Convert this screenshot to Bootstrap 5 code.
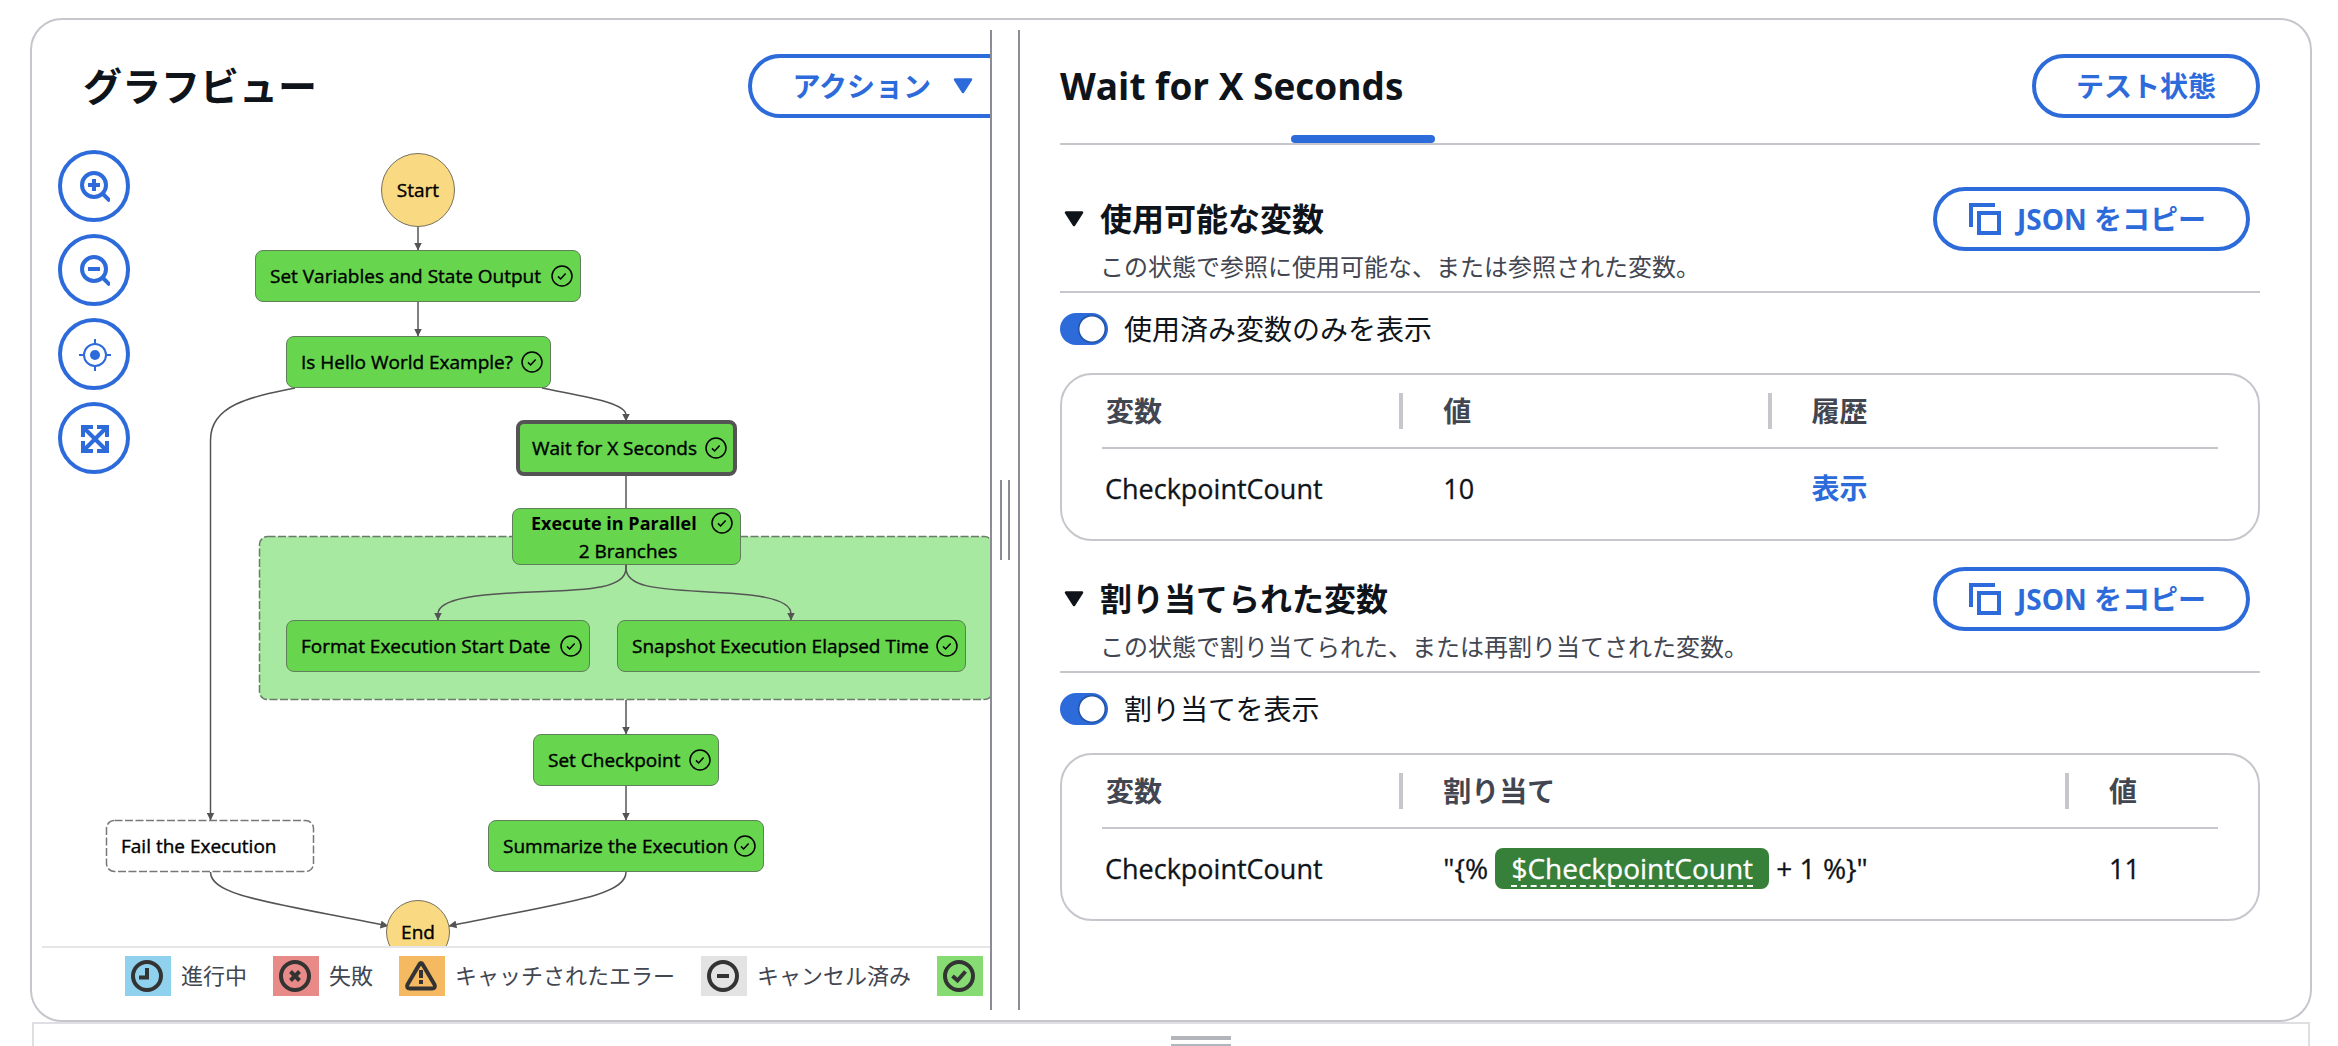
<!DOCTYPE html>
<html lang="ja">
<head>
<meta charset="utf-8">
<meta name="viewport" content="width=device-width, initial-scale=1">
<title>Wait for X Seconds</title>
<link href="https://cdn.jsdelivr.net/npm/bootstrap@5.3.0/dist/css/bootstrap.min.css" rel="stylesheet">
<style>
:root { --line:#c6c6cd; --blue:#2d6bdb; --ink:#0f141a; --soft:#424650; --rule:#8c8c94; --run:#67d54e; --edge:#545454; }
body { font-family:"Open Sans","Noto Sans CJK JP",sans-serif; color:var(--ink); background:#fff; font-size:27px; line-height:36px; }
.page { height:100vh; min-height:1046px; overflow:hidden; padding:18px 26px 0 30px; }
.shell { border:2px solid var(--line); border-radius:32px; padding:10px 0 10px 10px; min-height:0; }
.drawer { height:24px; margin:0 2px; border:2px solid #dedee3; border-bottom:0; padding:12px 0 0 60px; gap:4px; overflow:hidden; }
.drawer i { width:60px; height:4px; flex:none; background:#b4b4bb; }
.graph-pane { flex:948 1 0; min-width:0; overflow:hidden; }
.split { width:30px; flex:none; border:solid var(--rule); border-width:0 2px; gap:6px; cursor:col-resize; }
.split i { width:2px; height:80px; background:var(--rule); }
.detail-pane { flex:1200 1 0; min-width:0; padding:24px 50px 0 40px; }
.graph-head { padding:24px 0 0 41px; margin-right:-29px; }
h1, h2 { font-size:39px; line-height:64px; font-weight:700; margin:0; white-space:nowrap; }
h2 { font-size:37px; }
.pill { height:64px; border:4px solid var(--blue); border-radius:32px; color:var(--blue); font-size:28px; line-height:36px; font-weight:700; padding:0 40px; white-space:nowrap; background:#fff; }
.pill:hover { color:#002b66; border-color:#002b66; background:#f0fbff; }
.pill-copy { padding-left:32px; margin-right:10px; gap:16px; }
.pill svg, .round svg, .fold svg { fill:none; stroke:currentColor; flex:none; }
.pill-menu { gap:22px; padding-right:42px; }
.canvas { position:relative; min-height:0; overflow:hidden; }
.canvas > svg { position:absolute; left:0; top:0; }
.tools { position:absolute; left:16px; top:32px; gap:12px; }
.round { width:72px; height:72px; border:4px solid var(--blue); border-radius:50%; background:#fff; color:var(--blue); padding:0; }
.step { position:absolute; height:52px; border:1px solid #5f7f5b; border-radius:8px; background:var(--run); color:#000; font-size:19px; line-height:28px; white-space:nowrap; padding:0 7px 0 14px; -webkit-text-stroke:.4px; }
.step svg { flex:none; width:22px; height:22px; fill:none; stroke:#000; stroke-width:1.5; }
.step b { -webkit-text-stroke:0; font-size:18px; }
.step-round { border-radius:50%; background:#f9da83; border-color:#77705c; padding:0; }
.step-plain { background:none; border-color:transparent; }
.step-current { border:4px solid var(--edge); height:56px; padding:0 6px 0 12px; }
.step-parallel { height:57px; padding:0 7px 0 18px; }
.n-start { left:339px; top:35px; width:74px; height:74px; }
.n-vars { left:213px; top:132px; width:326px; }
.n-hello { left:244px; top:218px; width:265px; }
.n-wait { left:474px; top:302px; width:221px; }
.n-par { left:470px; top:390px; width:229px; }
.n-date { left:244px; top:502px; width:304px; }
.n-snap { left:575px; top:502px; width:349px; }
.n-check { left:491px; top:616px; width:186px; }
.n-sum { left:446px; top:702px; width:276px; }
.n-fail { left:64px; top:702px; width:208px; }
.n-end { left:344px; top:782px; width:64px; height:64px; }
.legend { height:64px; border-top:2px solid #e6e6e9; padding:8px 0 0 83px; gap:26px; font-size:22px; line-height:38px; color:var(--soft); white-space:nowrap; }
.legend > span { gap:10px; flex:none; }
.legend svg { width:46px; height:40px; fill:none; stroke:#333; stroke-width:4; }
.tabs { border-bottom:2px solid var(--line); padding:17px 0 0 231px; }
.tabs i { display:block; width:144px; height:8px; border-radius:4px; background:var(--blue); }
.var-block { margin-top:42px; }
.var-block + .var-block { margin-top:26px; }
.var-head { border-bottom:2px solid var(--line); padding-bottom:8px; }
.fold { border:0; background:none; padding:0 0 0 4px; gap:16px; color:var(--ink); font-weight:700; font-size:32px; line-height:64px; height:64px; }
.hint { margin:0 0 0 40px; font-size:24px; line-height:32px; color:var(--soft); }
.toggle-row { margin:20px 0 0; padding:0; min-height:32px; gap:16px; font-size:28px; line-height:32px; }
.toggle-row .form-check-input { float:none; margin:0; width:48px; height:32px; border:0; border-radius:16px; background:#8c8c94 radial-gradient(circle at 16px 16px,#fff 12px,transparent 13px); flex:none; }
.toggle-row .form-check-input:checked { background:var(--blue) radial-gradient(circle at 32px 16px,#fff 12px,#1f4f9f 13px,transparent 15px); }
.grid-box { margin-top:28px; border:2px solid var(--line); border-radius:32px; padding:0 40px 11px; }
.grid-box table { width:100%; table-layout:fixed; border-collapse:collapse; }
.grid-box thead tr { border-bottom:2px solid var(--line); }
.grid-box th { padding:18px 0; color:var(--soft); font-size:28px; }
.grid-box th span { display:block; height:36px; padding-left:40px; border-right:4px solid var(--line); }
.grid-box th:first-child span { padding-left:4px; }
.grid-box th:last-child span { border-right:0; }
.grid-box td { height:80px; padding:0 0 0 40px; vertical-align:middle; white-space:nowrap; -webkit-text-stroke:.3px; }
.grid-box td:first-child { padding-left:3px; }
.grid-box td.expr { font-size:28px; }
.grid-box td a { color:var(--blue); font-size:28px; font-weight:700; text-decoration:none; -webkit-text-stroke:0; }
.w-name { width:27%; } .w-value { width:33%; } .w-last { width:149px; }
.ref { display:inline-block; background:#37803a; color:#fff; border-radius:8px; padding:2px 16px; height:41px; line-height:36px; }
.ref span { display:block; height:37px; border-bottom:2px dashed #fff; }
</style>
<script src="https://cdn.jsdelivr.net/npm/bootstrap@5.3.0/dist/js/bootstrap.bundle.min.js" defer></script>
</head>
<body>
<svg width="0" height="0" class="position-absolute" aria-hidden="true">
  <symbol id="ok" viewBox="0 0 22 22"><circle cx="11" cy="11" r="10"/><path d="M7 11.400l2.600 2.600 5-5.500"/></symbol>
  <symbol id="copy" viewBox="0 0 32 32"><path d="M2 24V2h24" stroke-width="4"/><rect x="10" y="10" width="20" height="20" stroke-width="4"/></symbol>
  <symbol id="down" viewBox="0 0 20 16"><path d="M2 1.500h16L10 14z" fill="currentColor" stroke-width="2.500" stroke-linejoin="round"/></symbol>
</svg>
<div class="page d-flex flex-column">
  <main class="shell d-flex flex-grow-1">
    <section class="graph-pane d-flex flex-column">
      <header class="graph-head d-flex justify-content-between align-items-center">
        <h1>グラフビュー</h1>
        <button type="button" class="pill pill-menu d-flex align-items-center">アクション<svg width="20" height="16"><use href="#down"/></svg></button>
      </header>
      <div class="canvas flex-grow-1">
        <svg width="952" height="860" viewBox="42 118 952 860" fill="none" stroke="#545454" stroke-width="1.500">
          <defs><marker id="tip" viewBox="0 0 8 8" refX="7.500" refY="4" markerWidth="8" markerHeight="8" markerUnits="userSpaceOnUse" orient="auto"><path d="M0 0L8 4L0 8z" fill="#545454" stroke="none"/></marker></defs>
          <rect x="259.500" y="536.500" width="733" height="163" rx="8" fill="#a7e9a1" stroke="#6b7b69" stroke-dasharray="8 2.500"/>
          <rect x="106.500" y="820.500" width="207" height="51" rx="8" stroke="#777" stroke-dasharray="8 2.500"/>
          <path d="M418 226V250" marker-end="url(#tip)"/>
          <path d="M418 302V336" marker-end="url(#tip)"/>
          <path d="M295 388C250 397 210.500 405 210.500 440V820" marker-end="url(#tip)"/>
          <path d="M542 388C580 396 626 402 626 415V421" marker-end="url(#tip)"/>
          <path d="M626 476V508"/>
          <path d="M626 565V568C626 588 593 590 532 592C480 594 438 598 438 614V620" marker-end="url(#tip)"/>
          <path d="M626 565V568C626 588 660 589 708 592C750 594 791 597 791 614V620" marker-end="url(#tip)"/>
          <path d="M626 700V734" marker-end="url(#tip)"/>
          <path d="M626 786V820" marker-end="url(#tip)"/>
          <path d="M210.500 872C210.500 896 270 902 388 926" marker-end="url(#tip)"/>
          <path d="M626 872C626 896 566 902 449 926" marker-end="url(#tip)"/>
        </svg>
        <div class="step step-round n-start d-flex align-items-center justify-content-center">Start</div>
        <div class="step n-vars d-flex align-items-center justify-content-between">Set Variables and State Output<svg><use href="#ok"/></svg></div>
        <div class="step n-hello d-flex align-items-center justify-content-between">Is Hello World Example?<svg><use href="#ok"/></svg></div>
        <div class="step step-current n-wait d-flex align-items-center justify-content-between">Wait for X Seconds<svg><use href="#ok"/></svg></div>
        <div class="step step-parallel n-par">
          <div class="d-flex align-items-center justify-content-between"><b>Execute in Parallel</b><svg><use href="#ok"/></svg></div>
          <div class="text-center pe-2">2 Branches</div>
        </div>
        <div class="step n-date d-flex align-items-center justify-content-between">Format Execution Start Date<svg><use href="#ok"/></svg></div>
        <div class="step n-snap d-flex align-items-center justify-content-between">Snapshot Execution Elapsed Time<svg><use href="#ok"/></svg></div>
        <div class="step n-check d-flex align-items-center justify-content-between">Set Checkpoint<svg><use href="#ok"/></svg></div>
        <div class="step n-sum d-flex align-items-center justify-content-between">Summarize the Execution<svg><use href="#ok"/></svg></div>
        <div class="step step-plain n-fail d-flex align-items-center">Fail the Execution</div>
        <div class="step step-round n-end d-flex align-items-center justify-content-center">End</div>
        <div class="tools d-flex flex-column">
          <button type="button" class="round d-flex align-items-center justify-content-center" aria-label="拡大"><svg width="32" height="32" viewBox="-2 -1 32 32" stroke-width="4"><circle cx="14" cy="14" r="12"/><path d="M22.500 22.500L30 30M14 8v12M8 14h12"/></svg></button>
          <button type="button" class="round d-flex align-items-center justify-content-center" aria-label="縮小"><svg width="32" height="32" viewBox="-2 -1 32 32" stroke-width="4"><circle cx="14" cy="14" r="12"/><path d="M22.500 22.500L30 30M8 14h12"/></svg></button>
          <button type="button" class="round d-flex align-items-center justify-content-center" aria-label="中央に配置"><svg width="34" height="34" viewBox="-2 -2 34 34" stroke-width="2"><circle cx="16" cy="16" r="11"/><circle cx="16" cy="16" r="5" fill="currentColor" stroke="none"/><path d="M16 0v5M16 27v5M0 16h5M27 16h5"/></svg></button>
          <button type="button" class="round d-flex align-items-center justify-content-center" aria-label="全体を表示"><svg width="34" height="34" viewBox="-2 -2 34 34" stroke-width="4"><path d="M4 14V4h10M18 4h10v10M28 18v10H18M14 28H4V18M4 4l24 24M28 4L4 28"/></svg></button>
        </div>
      </div>
      <footer class="legend d-flex">
        <span class="d-flex"><svg><rect width="46" height="40" fill="#90d1ed" stroke="none"/><circle cx="22" cy="20" r="14"/><path d="M22 12v9.500h-8"/></svg>進行中</span>
        <span class="d-flex"><svg><rect width="46" height="40" fill="#e88b88" stroke="none"/><circle cx="22" cy="20" r="14"/><path d="M17.500 15.500l9 9M26.500 15.500l-9 9"/></svg>失敗</span>
        <span class="d-flex"><svg><rect width="46" height="40" fill="#f5b962" stroke="none"/><path d="M20 8.500q2-4 4 0L35.500 28q1.500 4-2.500 4H11q-4 0-2.500-4z" transform="translate(0 .5)"/><path d="M22 14v8M22 24v4"/></svg>キャッチされたエラー</span>
        <span class="d-flex"><svg><rect width="46" height="40" fill="#e3e3e3" stroke="none"/><circle cx="22" cy="20" r="14"/><path d="M16 20h12"/></svg>キャンセル済み</span>
        <span class="d-flex"><svg role="img" aria-label="成功"><rect width="46" height="40" fill="#86dc73" stroke="none"/><circle cx="22" cy="20" r="14"/><path d="M15.500 20l5 4.500 8-9"/></svg></span>
      </footer>
    </section>
    <div class="split d-flex align-items-center justify-content-center" role="separator" aria-orientation="vertical"><i></i><i></i></div>
    <section class="detail-pane">
      <header class="d-flex justify-content-between align-items-center">
        <h2>Wait for X Seconds</h2>
        <button type="button" class="pill">テスト状態</button>
      </header>
      <div class="tabs"><i></i></div>

      <section class="var-block">
        <div class="var-head">
          <div class="d-flex justify-content-between">
            <button type="button" class="fold d-flex align-items-center" aria-expanded="true"><svg width="20" height="16"><use href="#down"/></svg>使用可能な変数</button>
            <button type="button" class="pill pill-copy d-flex align-items-center"><svg width="32" height="32"><use href="#copy"/></svg>JSON をコピー</button>
          </div>
          <p class="hint">この状態で参照に使用可能な、または参照された変数。</p>
        </div>
        <div class="toggle-row form-check form-switch d-flex align-items-center">
          <input class="form-check-input" type="checkbox" role="switch" id="onlyUsed" checked>
          <label for="onlyUsed">使用済み変数のみを表示</label>
        </div>
        <div class="grid-box">
          <table>
            <thead><tr><th class="w-name"><span>変数</span></th><th class="w-value"><span>値</span></th><th><span>履歴</span></th></tr></thead>
            <tbody><tr><td>CheckpointCount</td><td>10</td><td><a href="#history">表示</a></td></tr></tbody>
          </table>
        </div>
      </section>

      <section class="var-block">
        <div class="var-head">
          <div class="d-flex justify-content-between">
            <button type="button" class="fold d-flex align-items-center" aria-expanded="true"><svg width="20" height="16"><use href="#down"/></svg>割り当てられた変数</button>
            <button type="button" class="pill pill-copy d-flex align-items-center"><svg width="32" height="32"><use href="#copy"/></svg>JSON をコピー</button>
          </div>
          <p class="hint">この状態で割り当てられた、または再割り当てされた変数。</p>
        </div>
        <div class="toggle-row form-check form-switch d-flex align-items-center">
          <input class="form-check-input" type="checkbox" role="switch" id="showAssign" checked>
          <label for="showAssign">割り当てを表示</label>
        </div>
        <div class="grid-box">
          <table>
            <thead><tr><th class="w-name"><span>変数</span></th><th><span>割り当て</span></th><th class="w-last"><span>値</span></th></tr></thead>
            <tbody><tr><td>CheckpointCount</td><td class="expr">"{% <span class="ref"><span>$CheckpointCount</span></span> + 1 %}"</td><td>11</td></tr></tbody>
          </table>
        </div>
      </section>
    </section>
  </main>
  <div class="drawer d-flex flex-column align-items-center"><i></i><i></i></div>
</div>
</body>
</html>
